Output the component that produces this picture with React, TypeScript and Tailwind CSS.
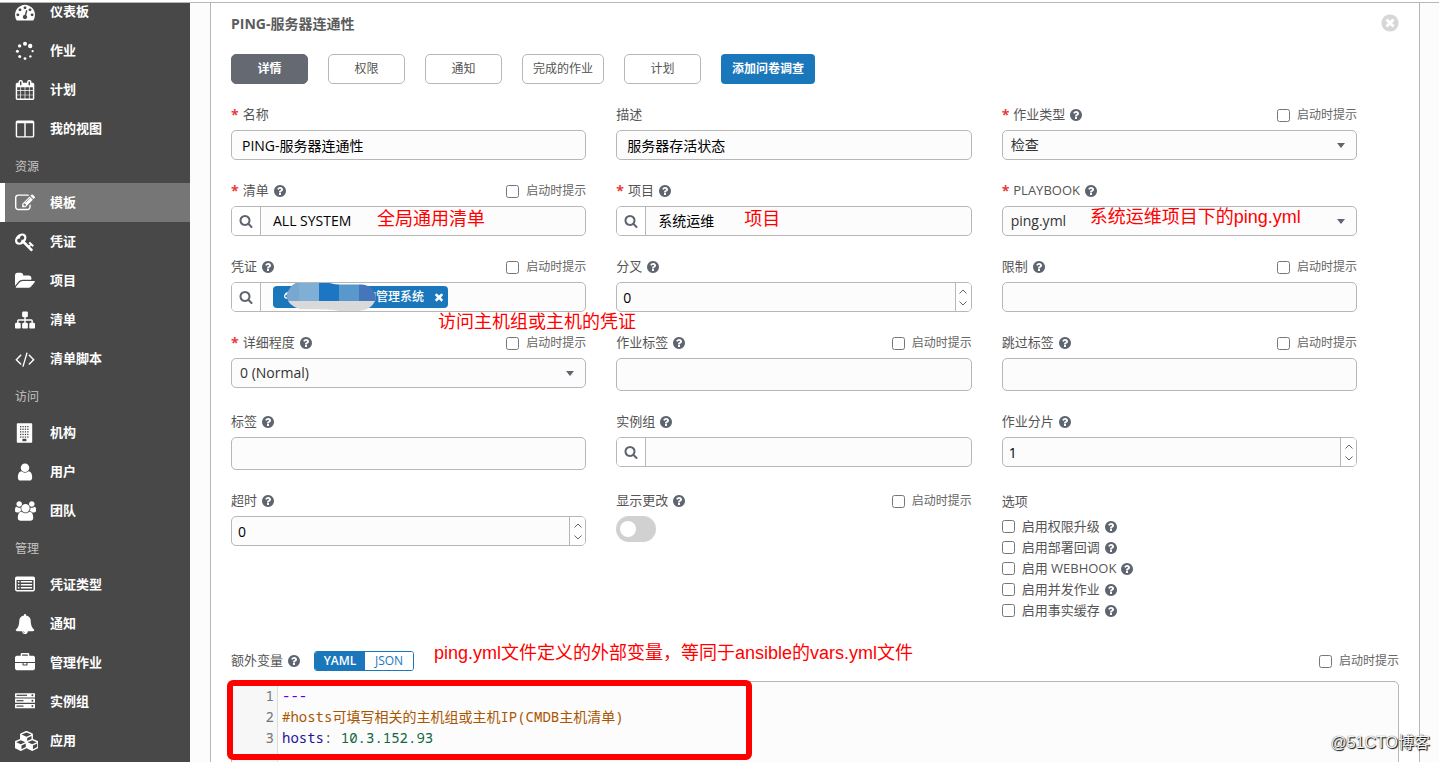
import React, { ReactNode, useId } from "react";

const ICONS = {
  question:
    "M1024 1376v-192q0-14-9-23t-23-9h-192q-14 0-23 9t-9 23v192q0 14 9 23t23 9h192q14 0 23-9t9-23zm256-672q0-88-55.5-163t-138.5-116-170-41q-243 0-371 213-15 24 8 42l132 100q7 6 19 6 16 0 25-12 53-68 86-92 34-24 86-24 48 0 85.5 26t37.5 59q0 38-20 61t-68 45q-63 28-115.5 86.5t-52.5 125.5v36q0 14 9 23t23 9h192q14 0 23-9t9-23q0-19 21.5-49.5t54.5-49.5q32-18 49-28.5t46-35 44.5-48 28-60.5 12.5-81zm384 192q0 209-103 385.5t-279.5 279.5-385.5 103-385.5-103-279.5-279.5-103-385.5 103-385.5 279.5-279.5 385.5-103 385.5 103 279.5 279.5 103 385.5z",
  search:
    "M1216 832q0-185-131.5-316.5t-316.5-131.5-316.5 131.5-131.5 316.5 131.5 316.5 316.5 131.5 316.5-131.5 131.5-316.5zm512 832q0 52-38 90t-90 38q-54 0-90-38l-343-342q-179 124-399 124-143 0-273.5-55.5t-225-150-150-225-55.5-273.5 55.5-273.5 150-225 225-150 273.5-55.5 273.5 55.5 225 150 150 225 55.5 273.5q0 220-124 399l343 343q37 37 37 90z",
  timesCircle:
    "M1277 1122q0-26-19-45l-181-181 181-181q19-19 19-45 0-27-19-46l-90-90q-19-19-46-19-26 0-45 19l-181 181-181-181q-19-19-45-19-27 0-46 19l-90 90q-19 19-19 46 0 26 19 45l181 181-181 181q-19 19-19 45 0 27 19 46l90 90q19 19 46 19 26 0 45-19l181-181 181 181q19 19 45 19 27 0 46-19l90-90q19-19 19-46zm387-226q0 209-103 385.5t-279.5 279.5-385.5 103-385.5-103-279.5-279.5-103-385.5 103-385.5 279.5-279.5 385.5-103 385.5 103 279.5 279.5 103 385.5z",
  times:
    "M1490 1322q0 40-28 68l-136 136q-28 28-68 28t-68-28l-294-294-294 294q-28 28-68 28t-68-28l-136-136q-28-28-28-68t28-68l294-294-294-294q-28-28-28-68t28-68l136-136q28-28 68-28t68 28l294 294 294-294q28-28 68-28t68 28l136 136q28 28 28 68t-28 68l-294 294 294 294q28 28 28 68z",
  sitemap:
    "M1792 1248v320q0 40-28 68t-68 28h-320q-40 0-68-28t-28-68v-320q0-40 28-68t68-28h96v-192h-512v192h96q40 0 68 28t28 68v320q0 40-28 68t-68 28h-320q-40 0-68-28t-28-68v-320q0-40 28-68t68-28h96v-192h-512v192h96q40 0 68 28t28 68v320q0 40-28 68t-68 28h-320q-40 0-68-28t-28-68v-320q0-40 28-68t68-28h96v-192q0-52 38-90t90-38h512v-192h-96q-40 0-68-28t-28-68v-320q0-40 28-68t68-28h320q40 0 68 28t28 68v320q0 40-28 68t-68 28h-96v192h512q52 0 90 38t38 90v192h96q40 0 68 28t28 68z",
  briefcase:
    "M640 256h512v-128h-512v128zm1152 640v480q0 66-47 113t-113 47h-1472q-66 0-113-47t-47-113v-480h672v160q0 26 19 45t45 19h320q26 0 45-19t19-45v-160h672zm-768 0v128h-256v-128h256zm768-480v384h-1792v-384q0-66 47-113t113-47h352v-160q0-40 28-68t68-28h576q40 0 68 28t28 68v160h352q66 0 113 47t47 113z",
  folderOpen:
    "M1879 952q0 31-31 66l-336 396q-43 51-120.5 86.5t-143.5 35.5h-1088q-34 0-60.5-13t-26.5-43q0-31 31-66l336-396q43-51 120.5-86.5t143.5-35.5h1088q34 0 60.5 13t26.5 43zm-343-344v160h-832q-94 0-197 47.5t-164 119.5l-337 396-5 6q0-4-.5-12.5t-.5-12.5v-960q0-92 66-158t158-66h320q92 0 158 66t66 158v32h544q92 0 158 66t66 158z",
  user:
    "M1536 1399q0 109-62.5 187t-150.5 78h-854q-88 0-150.5-78t-62.5-187q0-85 8.5-160.5t31.5-152 58.5-131 94-89 134.5-34.5q131 128 313 128t313-128q76 0 134.5 34.5t94 89 58.5 131 31.5 152 8.5 160.5zm-256-887q0 159-112.5 271.5t-271.5 112.5-271.5-112.5-112.5-271.5 112.5-271.5 271.5-112.5 271.5 112.5 112.5 271.5z",
  users:
    "M593 896q-162 5-265 128h-134q-82 0-138-40.5t-56-118.5q0-353 124-353 6 0 43.5 21t97.5 42.5 119 21.5q67 0 133-23-5 37-5 66 0 159 90 256zm1071 637q0 120-73 189.5t-194 69.5h-874q-121 0-194-69.5t-73-189.5q0-53 3.5-103.5t14-109 26.5-108.5 43-97.5 62-81 85.5-53.5 111.5-20q10 0 43 21.5t73 48 107 48 135 21.5 135-21.5 107-48 73-48 43-21.5q61 0 111.5 20t85.5 53.5 62 81 43 97.5 26.5 108.5 14 109 3.5 103.5zm-1024-1277q0 106-75 181t-181 75-181-75-75-181 75-181 181-75 181 75 75 181zm704 384q0 159-112.5 271.5t-271.5 112.5-271.5-112.5-112.5-271.5 112.5-271.5 271.5-112.5 271.5 112.5 112.5 271.5zm576 225q0 78-56 118.5t-138 40.5h-134q-103-123-265-128 90-97 90-256 0-29-5-66 66 23 133 23 59 0 119-21.5t97.5-42.5 43.5-21q124 0 124 353zm-128-609q0 106-75 181t-181 75-181-75-75-181 75-181 181-75 181 75 75 181z",
  dashboard:
    "M384 1152q0-53-37.5-90.5t-90.5-37.5-90.5 37.5-37.5 90.5 37.5 90.5 90.5 37.5 90.5-37.5 37.5-90.5zm192-448q0-53-37.5-90.5t-90.5-37.5-90.5 37.5-37.5 90.5 37.5 90.5 90.5 37.5 90.5-37.5 37.5-90.5zm428 481l101-382q6-26-7.5-48.5t-38.5-29.5-48 6.5-30 39.5l-101 382q-60 5-107 43.5t-63 98.5q-20 77 20 146t117 89 146-20 89-117q16-60-6-117t-72-91zm660-33q0-53-37.5-90.5t-90.5-37.5-90.5 37.5-37.5 90.5 37.5 90.5 90.5 37.5 90.5-37.5 37.5-90.5zm-640-640q0-53-37.5-90.5t-90.5-37.5-90.5 37.5-37.5 90.5 37.5 90.5 90.5 37.5 90.5-37.5 37.5-90.5zm448 192q0-53-37.5-90.5t-90.5-37.5-90.5 37.5-37.5 90.5 37.5 90.5 90.5 37.5 90.5-37.5 37.5-90.5zm320 448q0 261-141 483-19 29-54 29h-1402q-35 0-54-29-141-221-141-483 0-182 71-348t191-286 286-191 348-71 348 71 286 191 191 286 71 348z",
  calendar:
    "M192 1664h288v-288h-288v288zm352 0h320v-288h-320v288zm-352-352h288v-320h-288v320zm352 0h320v-320h-320v320zm-352-384h288v-288h-288v288zm736 736h320v-288h-320v288zm-384-736h320v-288h-320v288zm768 736h288v-288h-288v288zm-384-352h320v-320h-320v320zm-352-864v-288q0-13-9.5-22.5t-22.5-9.5h-64q-13 0-22.5 9.5t-9.5 22.5v288q0 13 9.5 22.5t22.5 9.5h64q13 0 22.5-9.5t9.5-22.5zm736 864h288v-320h-288v320zm-384-384h320v-288h-320v288zm384 0h288v-288h-288v288zm32-480v-288q0-13-9.5-22.5t-22.5-9.5h-64q-13 0-22.5 9.5t-9.5 22.5v288q0 13 9.5 22.5t22.5 9.5h64q13 0 22.5-9.5t9.5-22.5zm384-64v1280q0 52-38 90t-90 38h-1408q-52 0-90-38t-38-90v-1280q0-52 38-90t90-38h128v-96q0-66 47-113t113-47h64q66 0 113 47t47 113v96h384v-96q0-66 47-113t113-47h64q66 0 113 47t47 113v96h128q52 0 90 38t38 90z",
  columns:
    "M224 1536h608v-1152h-640v1120q0 13 9.5 22.5t22.5 9.5zm1376-32v-1120h-640v1152h608q13 0 22.5-9.5t9.5-22.5zm128-1216v1216q0 66-47 113t-113 47h-1344q-66 0-113-47t-47-113v-1216q0-66 47-113t113-47h1344q66 0 113 47t47 113z",
  edit:
    "M888 1184l116-116-152-152-116 116v56h96v96h56zm440-720q-16-16-33 1l-350 350q-17 17-1 33t33-1l350-350q17-17 1-33zm80 594v190q0 119-84.5 203.5t-203.5 84.5h-832q-119 0-203.5-84.5t-84.5-203.5v-832q0-119 84.5-203.5t203.5-84.5h832q63 0 117 25 15 7 18 23 3 17-9 29l-49 49q-14 14-32 8-23-6-45-6h-832q-66 0-113 47t-47 113v832q0 66 47 113t113 47h832q66 0 113-47t47-113v-126q0-13 9-22l64-64q15-15 35-7t20 29zm-96-738l288 288-672 672h-288v-288zm444 132l-92 92-288-288 92-92q28-28 68-28t68 28l152 152q28 28 28 68t-28 68z",
  key:
    "M832 512q0-80-56-136t-136-56-136 56-56 136q0 42 19 83-41-19-83-19-80 0-136 56t-56 136 56 136 136 56 136-56 56-136q0-42-19-83 41 19 83 19 80 0 136-56t56-136zm851 704q0 17-49 66t-66 49q-9 0-28.5-16t-36.5-33-38.5-40-24.5-26l-96 96 220 220q28 28 28 68 0 42-39 81t-81 39q-40 0-68-28l-671-671q-176 131-365 131-163 0-265.5-102.5t-102.5-265.5q0-160 95-313t248-248 313-95q163 0 265.5 102.5t102.5 265.5q0 189-131 365l355 355 96-96q-3-3-26-24.5t-40-38.5-33-36.5-16-28.5q0-17 49-66t66-49q13 0 23 10 6 6 46 44.5t82 79.5 86.5 86 73 78 28.5 41z",
  code:
    "M617 1399l-50 50q-10 10-23 10t-23-10l-466-466q-10-10-10-23t10-23l466-466q10-10 23-10t23 10l50 50q10 10 10 23t-10 23l-393 393 393 393q10 10 10 23t-10 23zm591-1067l-373 1291q-4 13-15.5 19.5t-23.5 2.5l-62-17q-13-4-19.5-15.5t-2.5-24.5l373-1291q4-13 15.5-19.5t23.5-2.5l62 17q13 4 19.5 15.5t2.5 24.5zm657 651l-466 466q-10 10-23 10t-23-10l-50-50q-10-10-10-23t10-23l393-393-393-393q-10-10-10-23t10-23l50-50q10-10 23-10t23 10l466 466q10 10 10 23t-10 23z",
  bell:
    "M912 1696q0-16-16-16-59 0-101.5-42.5t-42.5-101.5q0-16-16-16t-16 16q0 73 51.5 124.5t124.5 51.5q16 0 16-16zm816-288q0 52-38 90t-90 38h-448q0 106-75 181t-181 75-181-75-75-181h-448q-52 0-90-38t-38-90q50-42 91-88t85-119.5 74.5-158.5 50-206 19.5-260q0-152 117-282.5t307-158.5q-8-19-8-39 0-40 28-68t68-28 68 28 28 68q0 20-8 39 190 28 307 158.5t117 282.5q0 139 19.5 260t50 206 74.5 158.5 85 119.5 91 88z",
  cubes:
    "M640 1632l384-192v-314l-384 164v342zm-64-454l404-173-404-173-404 173zm1088 454l384-192v-314l-384 164v342zm-64-454l404-173-404-173-404 173zm-448-293l384-165v-266l-384 164v267zm-64-379l441-189-441-189-441 189zm1088 518v416q0 36-19 67t-52 47l-448 224q-25 14-57 14t-57-14l-448-224q-4-2-7-4-2 2-7 4l-448 224q-25 14-57 14t-57-14l-448-224q-33-16-52-47t-19-67v-416q0-38 21.5-70t56.5-48l434-186v-400q0-38 21.5-70t56.5-48l448-192q23-10 50-10t50 10l448 192q35 16 56.5 48t21.5 70v400l434 186q36 16 57 48t21 70z",
};

type IconName = keyof typeof ICONS;

function Icon({ name, className, viewBox = "0 0 1792 1792" }: { name: IconName; className: string; viewBox?: string }) {
  return (
    <svg viewBox={viewBox} className={`shrink-0 fill-current ${className}`} aria-hidden="true">
      <path d={ICONS[name]} />
    </svg>
  );
}

function Spinner() {
  return (
    <svg viewBox="0 0 20 20" className="size-5 fill-current" aria-hidden="true">
      <circle cx="10" cy="2.8" r="2" />
      <circle cx="15.2" cy="5" r="2.2" />
      <circle cx="17.6" cy="10.2" r="1.1" />
      <circle cx="15.4" cy="15.4" r="1.2" />
      <circle cx="10" cy="17.6" r="1.4" />
      <circle cx="4.7" cy="15.4" r="1.5" />
      <circle cx="2.4" cy="10.2" r="1.5" />
      <circle cx="4.6" cy="4.9" r="1.7" />
    </svg>
  );
}

function Building() {
  const cols = [5, 7.4, 9.8, 12.2];
  const rows = [3, 5.6, 8.2, 10.8, 13.4];
  return (
    <svg viewBox="0 0 20 20" className="size-5 fill-current" aria-hidden="true">
      <rect x="1.8" y="0.3" width="15.4" height="19.4" rx="0.8" />
      <g className="fill-[#484848]">
        {rows.map((y) => cols.map((x) => <rect key={`${x}-${y}`} x={x} y={y} width="1.3" height="1.3" />))}
        <rect x="7.4" y="15.8" width="4" height="2.4" />
      </g>
    </svg>
  );
}

function ListAlt() {
  return (
    <svg viewBox="0 0 20 20" className="size-5 fill-current" aria-hidden="true">
      <path
        fillRule="evenodd"
        d="M1.8 1.4h16.4a1.8 1.8 0 0 1 1.8 1.8v11.4a1.8 1.8 0 0 1-1.8 1.8H1.8A1.8 1.8 0 0 1 0 14.600V3.200A1.800 1.800 0 0 1 1.800 1.400zM1.500 5v9.400q0 .5.5.5h16q.5 0 .5-.5V5z"
      />
      <path d="M2.900 6.100h1.500v1.500H2.900zM2.900 9h1.500v1.500H2.900zM2.900 11.900h1.500v1.500H2.900zM5.800 6.100h11.300v1.500H5.800zM5.800 9h11.300v1.500H5.800zM5.800 11.900h11.300v1.500H5.800z" />
    </svg>
  );
}

function Server() {
  return (
    <svg viewBox="0 0 20 20" className="size-5 fill-current" aria-hidden="true">
      {[1.2, 6.6, 12].map((y) => (
        <g key={y}>
          <rect x="0" y={y} width="20" height="4.200" rx="0.500" />
          <rect x="1.500" y={y + 1.5} width={y === 1.2 ? 10.5 : 7} height="1.200" className="fill-[#484848]" />
          <circle cx="17.400" cy={y + 2.1} r="1" className="fill-[#484848]" />
        </g>
      ))}
    </svg>
  );
}

interface NavEntry {
  label: string;
  icon: ReactNode;
  active?: boolean;
}

const NAV: { title?: string; items: NavEntry[] }[] = [
  {
    items: [
      { label: "仪表板", icon: <Icon name="dashboard" className="size-5" /> },
      { label: "作业", icon: <Spinner /> },
      { label: "计划", icon: <Icon name="calendar" className="size-5" /> },
      { label: "我的视图", icon: <Icon name="columns" className="size-5" /> },
    ],
  },
  {
    title: "资源",
    items: [
      { label: "模板", icon: <Icon name="edit" className="size-5" />, active: true },
      { label: "凭证", icon: <Icon name="key" className="size-5" /> },
      { label: "项目", icon: <Icon name="folderOpen" className="size-5" viewBox="0 0 1879 1792" /> },
      { label: "清单", icon: <Icon name="sitemap" className="size-5" /> },
      { label: "清单脚本", icon: <Icon name="code" className="size-5" viewBox="0 0 1920 1792" /> },
    ],
  },
  {
    title: "访问",
    items: [
      { label: "机构", icon: <Building /> },
      { label: "用户", icon: <Icon name="user" className="size-5" /> },
      { label: "团队", icon: <Icon name="users" className="h-5 w-[21px]" viewBox="0 0 1920 1792" /> },
    ],
  },
  {
    title: "管理",
    items: [
      { label: "凭证类型", icon: <ListAlt /> },
      { label: "通知", icon: <Icon name="bell" className="size-5" /> },
      { label: "管理作业", icon: <Icon name="briefcase" className="size-5" /> },
      { label: "实例组", icon: <Server /> },
      { label: "应用", icon: <Icon name="cubes" className="h-5 w-[23px]" viewBox="64 0 2048 1792" /> },
    ],
  },
];

function Sidebar() {
  return (
    <nav className="w-[190px] shrink-0 overflow-hidden bg-[#484848]">
      <div className="-mt-[11px]">
        {NAV.map((group, i) => (
          <div key={i}>
            {group.title && (
              <h2 className="flex h-[35px] items-center pt-[2px] pl-[15px] text-xs text-[#c4c4c4]">{group.title}</h2>
            )}
            <ul>
              {group.items.map((item) => (
                <li key={item.label}>
                  <a
                    href="#"
                    className={`flex h-[39px] items-center border-l-[5px] pl-[10px] text-[13px] font-bold text-white ${
                      item.active ? "border-white bg-[#767676]" : "border-transparent"
                    }`}
                  >
                    <span className="flex w-[35px] shrink-0">{item.icon}</span>
                    {item.label}
                  </a>
                </li>
              ))}
            </ul>
          </div>
        ))}
      </div>
    </nav>
  );
}

function Help() {
  return (
    <button type="button" aria-label="帮助" className="ml-1 text-[#5f6570]">
      <Icon name="question" className="block size-[14px]" />
    </button>
  );
}

function Prompt() {
  return (
    <label className="flex items-center gap-[7px] text-xs text-[#666]">
      <input type="checkbox" className="size-[13px]" />
      启动时提示
    </label>
  );
}

const BOX = "rounded-[5px] border border-[#b7b7b7] bg-[#fcfcfc]";

interface FieldProps {
  label: string;
  required?: boolean;
  help?: boolean;
  prompt?: boolean;
  note?: ReactNode;
  children: (id: string) => ReactNode;
}

function Field({ label, required, help, prompt, note, children }: FieldProps) {
  const id = useId();
  return (
    <div className="relative min-w-0">
      <div className="mb-[5px] flex h-5 items-center justify-between">
        <span className="flex items-center text-[13px] text-[#555]">
          {required && <span className="mr-1 text-sm font-bold text-[#e83a3a]">*</span>}
          <label htmlFor={id}>{label}</label>
          {help && <Help />}
        </span>
        {prompt && <Prompt />}
      </div>
      {children(id)}
      {note}
    </div>
  );
}

function Note({ className, children }: { className: string; children: ReactNode }) {
  return (
    <p
      className={`pointer-events-none absolute z-10 font-['Liberation_Sans','Noto_Sans_CJK_SC',sans-serif] text-lg leading-7 whitespace-nowrap text-[#f00] ${className}`}
    >
      {children}
    </p>
  );
}

function TextBox({ id, value = "", tall }: { id: string; value?: string; tall?: boolean }) {
  return (
    <input
      id={id}
      type="text"
      defaultValue={value}
      className={`block w-full px-[10px] text-sm text-black ${BOX} ${tall ? "h-[33px]" : "h-[30px]"}`}
    />
  );
}

function SelectBox({ id, value }: { id: string; value: string }) {
  return (
    <div className="relative">
      <select id={id} className={`block h-[30px] w-full appearance-none px-2 text-sm text-[#333] ${BOX}`}>
        <option>{value}</option>
      </select>
      <svg viewBox="0 0 8 5" className="pointer-events-none absolute top-[13px] right-3 h-[5px] w-2 fill-[#5f6570]" aria-hidden="true">
        <path d="M0 0h8L4 5z" />
      </svg>
    </div>
  );
}

function Lookup({ id, value = "", children }: { id: string; value?: string; children?: ReactNode }) {
  return (
    <div className={`flex h-[30px] overflow-hidden ${BOX}`}>
      <button
        type="button"
        aria-label="搜索"
        className="flex w-[29px] shrink-0 items-center justify-center border-r border-[#b7b7b7] bg-white text-[#5f6570]"
      >
        <Icon name="search" className="size-[14px]" />
      </button>
      {children}
      <input id={id} type="text" defaultValue={value} className="min-w-0 flex-1 px-3 text-sm text-black" />
    </div>
  );
}

function NumberBox({ id, value }: { id: string; value: number }) {
  return (
    <div className={`flex h-[30px] overflow-hidden ${BOX}`}>
      <input
        id={id}
        type="number"
        defaultValue={value}
        className="min-w-0 flex-1 [appearance:textfield] px-[6px] pt-px text-sm text-black [&::-webkit-inner-spin-button]:appearance-none"
      />
      <div className="flex w-4 shrink-0 flex-col border-l border-[#b7b7b7] bg-white text-[#666]">
        <button type="button" aria-label="增加" className="flex flex-1 items-center justify-center pt-[3px]">
          <svg viewBox="0 0 8 5" className="h-[5px] w-2 fill-none stroke-current" aria-hidden="true">
            <path d="M.5 4.500L4 1l3.500 3.500" />
          </svg>
        </button>
        <button type="button" aria-label="减少" className="flex flex-1 items-center justify-center pb-[2px]">
          <svg viewBox="0 0 8 5" className="h-[5px] w-2 fill-none stroke-current" aria-hidden="true">
            <path d="M.5.500L4 4 7.500.500" />
          </svg>
        </button>
      </div>
    </div>
  );
}

function CredentialTag() {
  return (
    <div className="relative my-[3px] ml-3 flex w-[175px] shrink-0 items-center justify-between rounded bg-[#1b77bc] pr-[3px] pl-[11px] text-xs font-medium text-white">
      <Icon name="key" className="size-3" />
      <span className="flex items-center gap-[9px]">
        的管理系统
        <button type="button" aria-label="移除">
          <Icon name="times" className="block size-3" />
        </button>
      </span>
      <svg viewBox="0 0 90 30" className="absolute -top-1 left-[13px] h-[30px] w-[90px]" aria-hidden="true">
        <clipPath id="smudge">
          <path d="M12 0H40q8 2.500 14 2.500H76Q89 4 89.500 16 88 27 73 29 55 30 48 28q-8-1-34-1Q2 24 .5 14 3 3 12 0z" />
        </clipPath>
        <g clipPath="url(#smudge)">
          <rect width="13" height="19" fill="#78a7d0" />
          <rect x="13" width="20" height="19" fill="#7fafd5" />
          <rect x="33" width="20" height="19" fill="#1d76c3" />
          <rect x="53" width="20" height="19" fill="#5998cc" />
          <rect x="73" width="17" height="19" fill="#4575bb" />
          <rect y="19" width="90" height="11" fill="#d9d9d9" />
        </g>
      </svg>
    </div>
  );
}

const TABS = ["权限", "通知", "完成的作业", "计划"];
const OPTIONS = ["启用权限升级", "启用部署回调", "启用 WEBHOOK", "启用并发作业", "启用事实缓存"];

function ExtraVariables() {
  return (
    <section className="mt-[30px]">
      <div className="relative flex h-5 items-center">
        <span className="flex items-center text-[13px] text-[#555]">
          额外变量
          <Help />
        </span>
        <div className="mr-auto ml-[13px] flex h-5 w-[100px] overflow-hidden rounded-[3px] border border-[#1b77bc] text-xs">
          <button type="button" className="w-[50px] bg-[#1b77bc] font-semibold text-white">
            YAML
          </button>
          <button type="button" className="flex-1 bg-white text-[#1b77bc]">
            JSON
          </button>
        </div>
        <Prompt />
        <Note className="-top-3 left-[203px]">ping.yml文件定义的外部变量，等同于ansible的vars.yml文件</Note>
      </div>
      <div className="relative mt-[10px]">
        <div
          className={`flex h-[200px] overflow-hidden font-['Noto_Sans_Mono','Noto_Sans_Mono_CJK_SC','DejaVu_Sans_Mono','Noto_Sans_CJK_SC',monospace] text-sm leading-[21px] ${BOX}`}
        >
          <ol className="w-[46px] shrink-0 border-r border-[#ddd] bg-[#f7f7f7] pt-[3px] pr-[3px] text-right text-[#777]">
            <li>1</li>
            <li>2</li>
            <li>3</li>
          </ol>
          <div className="pt-[3px] pl-1 whitespace-pre">
            <div className="text-[#5500ff]">---</div>
            <div className="text-[#a50]">#hosts可填写相关的主机组或主机IP(CMDB主机清单)</div>
            <div className="text-[#164]">
              <span className="text-[#219]">hosts</span>
              <span className="text-[#555]">: </span>
              10.3.152.93
            </div>
          </div>
        </div>
        <div className="pointer-events-none absolute -top-px -left-1 h-[80px] w-[525px] rounded-md border-[6px] border-[#f00]" />
      </div>
    </section>
  );
}

function Form() {
  return (
    <div className="grid grid-cols-3 gap-x-[30px] gap-y-[21px] pr-[42px]">
      <Field label="名称" required>
        {(id) => <TextBox id={id} value="PING-服务器连通性" />}
      </Field>
      <Field label="描述">{(id) => <TextBox id={id} value="服务器存活状态" />}</Field>
      <Field label="作业类型" required help prompt>
        {(id) => <SelectBox id={id} value="检查" />}
      </Field>

      <Field label="清单" required help prompt note={<Note className="top-6 left-[146px]">全局通用清单</Note>}>
        {(id) => <Lookup id={id} value="ALL SYSTEM" />}
      </Field>
      <Field label="项目" required help note={<Note className="top-6 left-[128px]">项目</Note>}>
        {(id) => <Lookup id={id} value="系统运维" />}
      </Field>
      <Field label="PLAYBOOK" required help note={<Note className="top-[22px] left-[88px]">系统运维项目下的ping.yml</Note>}>
        {(id) => <SelectBox id={id} value="ping.yml" />}
      </Field>

      <Field label="凭证" help prompt note={<Note className="top-[51px] left-[207px]">访问主机组或主机的凭证</Note>}>
        {(id) => (
          <Lookup id={id}>
            <CredentialTag />
          </Lookup>
        )}
      </Field>
      <Field label="分叉" help>
        {(id) => <NumberBox id={id} value={0} />}
      </Field>
      <Field label="限制" help prompt>
        {(id) => <TextBox id={id} />}
      </Field>

      <Field label="详细程度" required help prompt>
        {(id) => <SelectBox id={id} value="0 (Normal)" />}
      </Field>
      <Field label="作业标签" help prompt>
        {(id) => <TextBox id={id} tall />}
      </Field>
      <Field label="跳过标签" help prompt>
        {(id) => <TextBox id={id} tall />}
      </Field>

      <Field label="标签" help>
        {(id) => <TextBox id={id} tall />}
      </Field>
      <Field label="实例组" help>
        {(id) => <Lookup id={id} />}
      </Field>
      <Field label="作业分片" help>
        {(id) => <NumberBox id={id} value={1} />}
      </Field>

      <Field label="超时" help>
        {(id) => <NumberBox id={id} value={0} />}
      </Field>
      <Field label="显示更改" help prompt>
        {(id) => (
          <button
            id={id}
            type="button"
            role="switch"
            aria-checked="false"
            className="flex h-[26px] w-10 items-center rounded-full bg-[#d1d1d1] pl-1"
          >
            <span className="size-4 rounded-full bg-white" />
          </button>
        )}
      </Field>
      <fieldset>
        <legend className="mb-[5px] h-5 text-[13px] leading-5 text-[#555]">选项</legend>
        {OPTIONS.map((option) => (
          <div key={option} className="flex h-[21px] items-center text-[13px] text-[#555]">
            <label className="flex items-center gap-[7px]">
              <input type="checkbox" className="size-[13px]" />
              {option}
            </label>
            <Help />
          </div>
        ))}
      </fieldset>
    </div>
  );
}

export default function App() {
  const tab = "h-[30px] min-w-[77px] rounded-[5px] border px-[10px] text-xs";
  return (
    <div className="relative flex h-screen flex-col overflow-hidden bg-white pt-[2px] font-['Open_Sans','Noto_Sans_CJK_SC',sans-serif]">
      <div className="flex min-h-0 flex-1 border-t border-[#b7b7b7]">
        <Sidebar />
        <main className="min-w-0 flex-1 bg-[#fcfcfc] pr-[19px] pl-5">
          <div className="border-x border-[#b7b7b7] bg-white px-5 pt-[10px]">
            <header className="flex items-start justify-between">
              <h1 className="text-sm leading-[22px] font-bold text-[#5c5c5c]">PING-服务器连通性</h1>
              <button type="button" aria-label="关闭" className="-mr-px text-[#d7d7d7]">
                <Icon name="timesCircle" className="block size-5" />
              </button>
            </header>
            <div className="mt-[19px] mb-[21px] flex gap-5">
              <button type="button" className={`${tab} border-[#646972] bg-[#646972] font-bold text-white`}>
                详情
              </button>
              {TABS.map((name) => (
                <button key={name} type="button" className={`${tab} border-[#b7b7b7] bg-white text-[#555]`}>
                  {name}
                </button>
              ))}
              <button type="button" className="h-[30px] rounded-[4px] bg-[#1b77bc] px-[11px] text-xs font-bold text-white">
                添加问卷调查
              </button>
            </div>
            <Form />
            <ExtraVariables />
          </div>
        </main>
      </div>
      <p className="pointer-events-none absolute right-[9px] bottom-[7px] font-['Liberation_Sans','Noto_Sans_CJK_SC',sans-serif] text-base leading-6 text-[#f4f4f4] [text-shadow:1px_1px_1px_#000,0_0_1px_#444]">
        @51CTO博客
      </p>
    </div>
  );
}
